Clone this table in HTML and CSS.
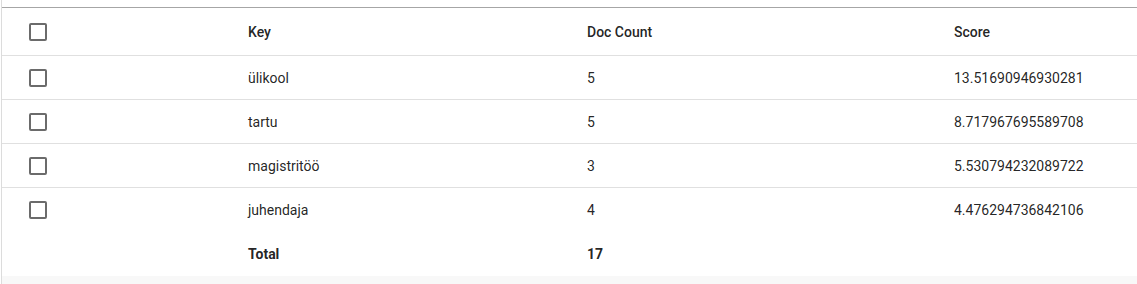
FILE: index.html
```html
<!DOCTYPE html>
<html>
<head>
<meta charset="utf-8">
<link rel="stylesheet" href="styles.css">
</head>
<body>
<div class="frame">
  <div class="table">
    <div class="row head">
      <div class="cell check"><span class="box"></span></div>
      <div class="cell">Key</div>
      <div class="cell">Doc Count</div>
      <div class="cell">Score</div>
    </div>
    <div class="row">
      <div class="cell check"><span class="box"></span></div>
      <div class="cell">ülikool</div>
      <div class="cell">5</div>
      <div class="cell">13.51690946930281</div>
    </div>
    <div class="row">
      <div class="cell check"><span class="box"></span></div>
      <div class="cell">tartu</div>
      <div class="cell">5</div>
      <div class="cell">8.717967695589708</div>
    </div>
    <div class="row">
      <div class="cell check"><span class="box"></span></div>
      <div class="cell">magistritöö</div>
      <div class="cell">3</div>
      <div class="cell">5.530794232089722</div>
    </div>
    <div class="row last">
      <div class="cell check"><span class="box"></span></div>
      <div class="cell">juhendaja</div>
      <div class="cell">4</div>
      <div class="cell">4.476294736842106</div>
    </div>
    <div class="row total">
      <div class="cell check"></div>
      <div class="cell">Total</div>
      <div class="cell">17</div>
      <div class="cell"></div>
    </div>
  </div>
  <div class="footer"></div>
</div>
</body>
</html>
```
FILE: styles.css
```css
html, body {
  margin: 0;
  padding: 0;
  background: #ffffff;
}
body {
  font-family: Roboto, "Liberation Sans", Arial, sans-serif;
  font-size: 14px;
  color: rgba(0, 0, 0, 0.87);
}
.frame {
  margin-left: 1px;
  border-left: 1px solid #dcdcdc;
  padding-top: 7px;
  height: 277px;
  display: flex;
  flex-direction: column;
}
.table {
  border-top: 1px solid #a6a6a6;
}
.row {
  display: grid;
  grid-template-columns: 246px 339px 367px 1fr;
  height: 43px;
  align-items: center;
  border-bottom: 1px solid #e0e0e0;
}
.row.head {
  height: 47px;
  font-weight: 500;
}
.row.last {
  border-bottom: none;
  height: 44px;
}
.row.total {
  border-bottom: none;
  height: 44px;
  font-weight: 700;
}
.cell {
  line-height: 20px;
}
.check {
  padding-left: 27px;
  display: flex;
  align-items: center;
}
.box {
  display: block;
  width: 14px;
  height: 14px;
  border: 2px solid #6b6b6b;
  border-radius: 2px;
}
.footer {
  flex: 1;
  background: #f8f8f8;
}
```
